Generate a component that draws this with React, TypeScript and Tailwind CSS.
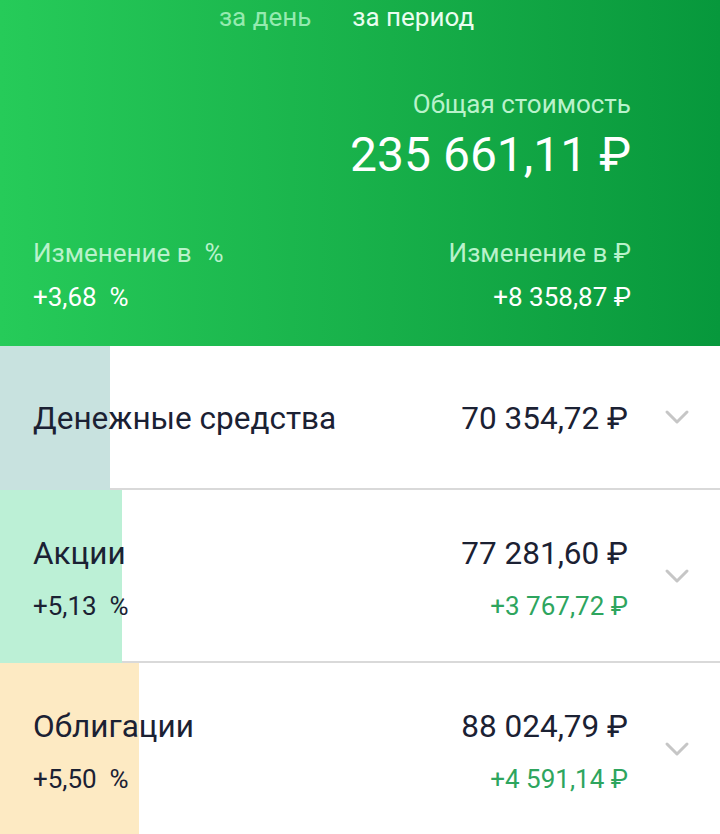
import React from 'react'

type Row = {
  title: string
  value: string
  percent?: string
  change?: string
  barClassName: string
}

const rows: Row[] = [
  { title: 'Денежные средства', value: '70 354,72 ₽', barClassName: 'w-[110px] bg-[#c8e2df]' },
  {
    title: 'Акции',
    value: '77 281,60 ₽',
    percent: '+5,13  %',
    change: '+3 767,72 ₽',
    barClassName: 'w-[122px] bg-[#bcf0d6]',
  },
  {
    title: 'Облигации',
    value: '88 024,79 ₽',
    percent: '+5,50  %',
    change: '+4 591,14 ₽',
    barClassName: 'w-[139px] bg-[#fdeac3]',
  },
]

function Chevron() {
  return (
    <svg width="26" height="16" viewBox="0 0 26 16" fill="none" className="shrink-0">
      <path d="M3 3l10 10L23 3" stroke="#c6c6c6" strokeWidth="3" strokeLinecap="round" strokeLinejoin="round" />
    </svg>
  )
}

function AssetRow({ row }: { row: Row }) {
  const simple = !row.percent
  return (
    <div
      className={`relative flex items-center border-b-2 border-[#d9d9d9] bg-white ${
        simple ? 'h-[144px]' : 'h-[173px]'
      }`}
    >
      <div className={`absolute left-0 top-0 bottom-[-2px] ${row.barClassName}`} />
      <div className="relative flex min-w-0 flex-1 items-center pl-[33px] pr-[30px]">
        <div className={`flex min-w-0 flex-1 flex-col ${simple ? 'mt-[3px]' : 'mt-[8px]'}`}>
          <div className="flex items-baseline justify-between">
            <span className="text-[31.5px] leading-[36px] text-[#1b2133]">{row.title}</span>
            <span className="text-[31.5px] leading-[36px] text-[#1b2133]">{row.value}</span>
          </div>
          {!simple && (
            <div className="mt-[16px] flex items-baseline justify-between">
              <span className="whitespace-pre text-[26px] leading-[36px] text-[#1b2133]">{row.percent}</span>
              <span className="text-[26px] leading-[36px] text-[#2ea55e]">{row.change}</span>
            </div>
          )}
        </div>
        <div className="ml-[36px]">
          <Chevron />
        </div>
      </div>
    </div>
  )
}

export default function App() {
  return (
    <div className="h-[834px] w-[720px] overflow-hidden bg-white font-['Roboto','Liberation_Sans',sans-serif]">
      <header className="h-[346px] bg-gradient-to-r from-[#26cb59] to-[#07983c]">
        <nav className="flex justify-center gap-[41px] pr-[27px] pt-[2px] text-[26px] leading-[30px]">
          <span className="text-[#95eab0]">за день</span>
          <span className="text-[#eafdf0]">за период</span>
        </nav>
        <div className="pl-[33px] pr-[89px]">
          <div className="mt-[57px] flex flex-col items-end">
            <span className="text-[26px] leading-[30px] text-[#b9f2cb]">Общая стоимость</span>
            <span className="mt-[8px] text-[48px] leading-[56px] text-white">235 661,11 ₽</span>
          </div>
          <div className="mt-[55px] flex justify-between">
            <div className="flex flex-col">
              <span className="whitespace-pre text-[26px] leading-[30px] text-[#b9f2cb]">Изменение в  %</span>
              <span className="mt-[14px] whitespace-pre text-[26px] leading-[30px] text-white">+3,68  %</span>
            </div>
            <div className="flex flex-col items-end">
              <span className="text-[26px] leading-[30px] text-[#b9f2cb]">Изменение в ₽</span>
              <span className="mt-[14px] text-[26px] leading-[30px] text-white">+8 358,87 ₽</span>
            </div>
          </div>
        </div>
      </header>
      {rows.map((row) => (
        <AssetRow key={row.title} row={row} />
      ))}
    </div>
  )
}
